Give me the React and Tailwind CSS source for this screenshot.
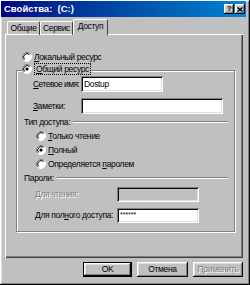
import React from "react";

const raised =
  "shadow-[inset_-1px_-1px_#0a0a0a,inset_1px_1px_#ffffff,inset_-2px_-2px_#808080,inset_2px_2px_#dfdfdf]";
const sunken =
  "shadow-[inset_1px_1px_#808080,inset_-1px_-1px_#ffffff,inset_2px_2px_#0a0a0a,inset_-2px_-2px_#dfdfdf]";
const disabledText = "text-[#808080] [text-shadow:1px_1px_0_#ffffff]";

function Radio({ checked }) {
  return (
    <svg width="10" height="10" viewBox="0 0 10 10" className="shrink-0">
      <circle cx="5" cy="5" r="4.5" fill="#fff" />
      <path d="M1.82 8.18A4.5 4.5 0 0 1 8.18 1.82" fill="none" stroke="#808080" />
      <path d="M8.18 1.82A4.5 4.5 0 0 1 1.82 8.18" fill="none" stroke="#fff" />
      <path d="M2.53 7.47A3.5 3.5 0 0 1 7.47 2.53" fill="none" stroke="#000" />
      {checked && <circle cx="5" cy="5" r="1.6" fill="#000" />}
    </svg>
  );
}

function Line() {
  return <div className="flex-1 border-t border-t-[#808080] border-b border-b-white" />;
}

function Tab({ active, children }) {
  return (
    <div
      className={`flex items-center justify-center rounded-t-[2px] border-t border-l border-white border-r border-r-[#404040] ${
        active
          ? "relative z-10 h-[16px] w-[35px] bg-[#c0c0c0] pb-[2px]"
          : "h-[14px] w-[33px] pb-[1px]"
      }`}
    >
      {children}
    </div>
  );
}

function RadioRow({ checked, children }) {
  return (
    <div className="h-[12px] flex items-center gap-[2px]">
      <Radio checked={checked} />
      <span>{children}</span>
    </div>
  );
}

export default function App() {
  return (
    <div
      className={`w-[250px] h-[285px] bg-[#c0c0c0] pt-[1px] pl-[1px] text-[8.5px] tracking-[-0.35px] leading-none text-black whitespace-nowrap font-['Liberation_Sans',Arial,sans-serif] ${raised}`}
    >
      {/* Title bar */}
      <div className="w-[245px] h-[16px] bg-linear-to-r from-[#000080] to-[#1084d0] flex items-center pl-[3px] pr-[1px]">
        <span className="text-white font-bold text-[9.5px] tracking-normal whitespace-pre">Свойства:  (C:)</span>
        <div className="ml-auto flex gap-[1px]">
          <div className={`w-[10px] h-[10px] bg-[#c0c0c0] flex items-center justify-center font-bold text-[8px] ${raised}`}>
            ?
          </div>
          <div className={`w-[10px] h-[10px] bg-[#c0c0c0] flex items-center justify-center ${raised}`}>
            <svg width="6" height="5" viewBox="0 0 6 5">
              <path d="M0.5 0.5L5.5 4.5M5.5 0.5L0.5 4.5" stroke="#000" strokeWidth="1.3" />
            </svg>
          </div>
        </div>
      </div>

      {/* Tabs */}
      <div className="mt-[2px] ml-[6px] h-[16px] flex items-end">
        <Tab>Общие</Tab>
        <Tab>Сервис</Tab>
        <Tab active>Доступ</Tab>
      </div>

      {/* Panel */}
      <div className="-mt-[1px] ml-[4px] w-[238px] h-[224px] bg-[#c0c0c0] pt-[17px] pl-[11px] shadow-[inset_1px_1px_#ffffff,inset_-1px_-1px_#404040,inset_-2px_-2px_#808080]">
        <div className="pl-[6px]">
          <RadioRow>
            <u>Л</u>окальный ресурс
          </RadioRow>
        </div>

        {/* Group box */}
        <div className="relative mt-[7px] w-[219px] h-[162px] border border-[#808080] shadow-[inset_1px_1px_#ffffff,1px_1px_#ffffff]">
          <div className="absolute left-[5px] top-[-8px] h-[12px] flex items-center gap-[2px] bg-[#c0c0c0] pr-[1px]">
            <Radio checked />
            <span className="border border-dotted border-black px-[1px] py-[1px]">
              <u>О</u>бщий ресурс
            </span>
          </div>

          <div className="mt-[5px] h-[16px] flex items-center pl-[16px]">
            <span className="w-[48px] shrink-0 tracking-[-0.55px]">
              <u>С</u>етевое имя:
            </span>
            <div className={`w-[82px] h-[16px] bg-white pl-[3px] pt-[4px] ${sunken}`}>Dostup</div>
          </div>

          <div className="mt-[6px] h-[16px] flex items-center pl-[16px]">
            <span className="w-[48px] shrink-0">
              <u>З</u>аметки:
            </span>
            <div className={`w-[142px] h-[16px] bg-white ${sunken}`} />
          </div>

          <div className="mt-[2px] h-[12px] flex items-center gap-[3px] pl-[7px] pr-[6px]">
            <span>Тип доступа:</span>
            <Line />
          </div>

          <div className="mt-[2px] pl-[19px] flex flex-col gap-[2px]">
            <RadioRow>
              <u>Т</u>олько чтение
            </RadioRow>
            <RadioRow checked>
              <u>П</u>олный
            </RadioRow>
            <RadioRow>
              Определяется <u>п</u>аролем
            </RadioRow>
          </div>

          <div className="mt-[2px] h-[12px] flex items-center gap-[3px] pl-[7px] pr-[6px]">
            <span>Пароли:</span>
            <Line />
          </div>

          <div className="mt-[3px] h-[15px] flex items-center pl-[18px]">
            <span className={`w-[82px] shrink-0 ${disabledText}`}>Для чтения:</span>
            <div className={`w-[82px] h-[15px] bg-[#c0c0c0] ${sunken}`} />
          </div>

          <div className="mt-[6px] h-[15px] flex items-center pl-[18px]">
            <span className="w-[82px] shrink-0">
              Для пол<u>н</u>ого доступа:
            </span>
            <div className={`w-[82px] h-[15px] bg-white pl-[3px] pt-[3px] text-[7px] tracking-normal ${sunken}`}>******</div>
          </div>
        </div>
      </div>

      {/* Buttons */}
      <div className="mt-[4px] ml-[82px] flex gap-[5px]">
        <div className={`w-[49px] h-[15px] bg-[#c0c0c0] flex items-center justify-center border border-black ${raised}`}>
          OK
        </div>
        <div className={`w-[51px] h-[15px] bg-[#c0c0c0] flex items-center justify-center ${raised}`}>Отмена</div>
        <div className={`w-[50px] h-[15px] bg-[#c0c0c0] flex items-center justify-center ${raised} ${disabledText}`}>
          Применить
        </div>
      </div>
    </div>
  );
}
